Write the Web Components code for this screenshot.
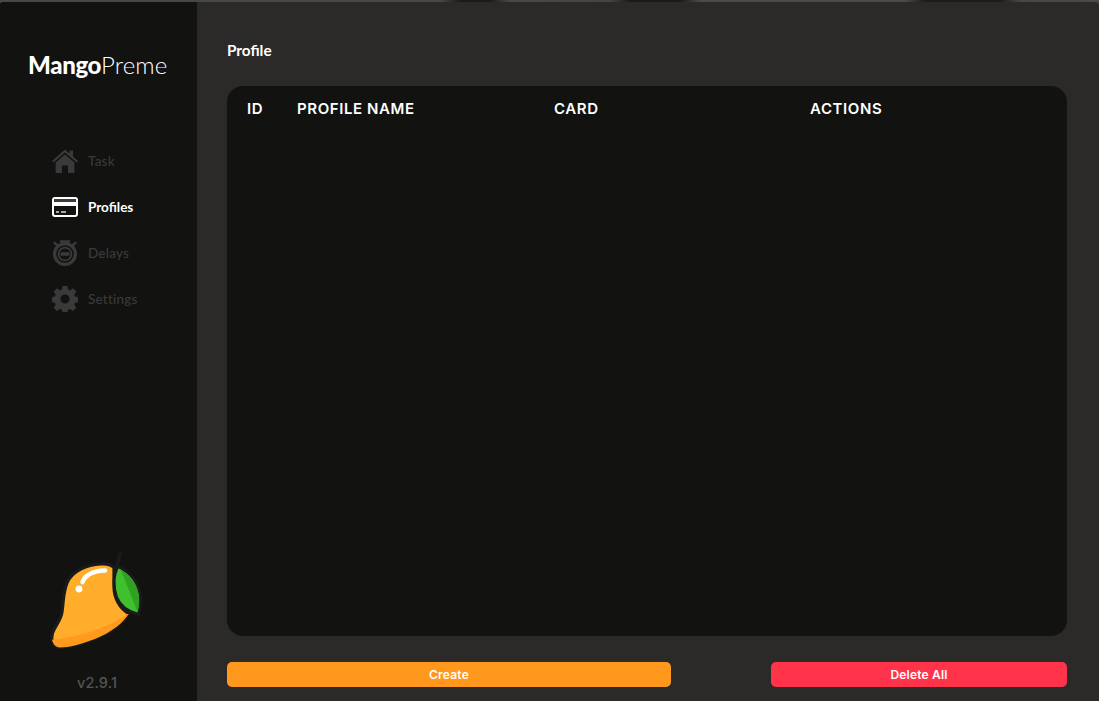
<!DOCTYPE html>
<html lang="en"><head><meta charset="utf-8"><title>MangoPreme</title>
<style>
html,body{margin:0;padding:0;height:100%;background:#2b2a29;overflow:hidden}
body{font-family:"Lato","Liberation Sans",sans-serif}
</style></head><body>
<app-shell>
  <side-bar slot="side">
    <nav-item label="Task" icon="home"></nav-item>
    <nav-item label="Profiles" icon="card" active></nav-item>
    <nav-item label="Delays" icon="watch"></nav-item>
    <nav-item label="Settings" icon="gear"></nav-item>
  </side-bar>
  <profile-page></profile-page>
</app-shell>
<script>
const ICONS={
home:`<svg width="26" height="24" viewBox="0 0 26 24"><path fill="currentColor" d="M13 0.6 L17.6 4.6V1.6H21V7.5L26 12 24.6 13.6 13 3.6 1.4 13.6 0 12Z"/><path fill="currentColor" d="M13 5.6 22.4 13.6V23a1 1 0 0 1-1 1H16V16.5H10V24H4.6a1 1 0 0 1-1-1V13.6Z"/></svg>`,
card:`<svg width="26" height="20" viewBox="0 0 26 20"><rect x="1" y="1" width="24" height="18" rx="2" fill="#121211" stroke="#fff" stroke-width="2"/><rect x="2" y="2" width="22" height="3" fill="#3b3b3b"/><rect x="2" y="5" width="22" height="4" fill="#fff"/><rect x="4" y="14" width="3" height="2" fill="#a8a8a8"/><rect x="9" y="14" width="5" height="2" fill="#a8a8a8"/></svg>`,
watch:`<svg width="26" height="27" viewBox="0 1 26 27"><g fill="none" stroke="currentColor"><circle cx="13" cy="15" r="10.4" stroke-width="3.2"/><circle cx="13" cy="15" r="6.4" stroke-width="1.8"/><path stroke-width="2.4" d="M8 2.4H18M10 2.4V5M16 2.4V5"/><path stroke-width="2.4" stroke-linecap="round" d="M2.600 3.800 5 6M23.400 3.800 21 6"/></g><rect x="8.500" y="13.300" width="9" height="3.400" rx=".8" fill="currentColor"/></svg>`,
gear:`<svg width="26" height="26" viewBox="0 0 26 26"><path fill="currentColor" fill-rule="evenodd" d="M10.600 0h4.800l.7 3.600 1.900.8 3-2.100 3.400 3.400-2.100 3 .8 1.900 3.600.7v4.800l-3.600.7-.8 1.900 2.100 3-3.400 3.400-3-2.100-1.900.8-.7 3.600h-4.800l-.7-3.600-1.900-.8-3 2.100-3.400-3.400 2.100-3-.8-1.900-3.600-.7v-4.800l3.600-.7.8-1.900-2.100-3 3.400-3.400 3 2.100 1.900-.8ZM13 8.400a4.600 4.600 0 1 0 0 9.200 4.600 4.600 0 0 0 0-9.200Z"/></svg>`};

function def(name,css,html){
  customElements.define(name,class extends HTMLElement{
    constructor(){super();const r=this.attachShadow({mode:'open'});
      r.innerHTML=`<style>${css}</style>${typeof html==='function'?html(this):html}`;}
  });
}

def('app-shell',`
:host{display:flex;flex-direction:column;width:1099px;height:701px;overflow:hidden;
  background:linear-gradient(90deg,#484847 0,#484847 440px,#1c1b1b 460px,#1c1b1b 490px,#484847 510px,#444 610px,#1a1a1a 630px,#1a1a1a 680px,#4a4a4a 700px,#4a4a4a 905px,#1c1c1c 925px,#1c1c1c 1000px,#464646 1020px,#4a4a4a 1099px)}
.row{flex:1;display:flex;min-height:0;margin-top:2px;background:#2b2a29;border-radius:3px 4px 0 0;overflow:hidden}
`,`<div class="row"><slot name="side"></slot><slot></slot></div>`);

def('mango-logo',`
:host{display:block;width:105px;height:105px}
svg{display:block}
`,`<svg width="105" height="105" viewBox="0 0 105 105">
<defs><clipPath id="b"><path id="bp" d="M56 14C61 13.500 66 15 69 17.500L69 37C69 47 74 58 84 63.500 78 73 67 82 50 89 36 94 24 97.500 15 97.500 8 97 5.500 89 7.500 83 10 76 16 70 17 62 18.500 52 18 43 22 33 27 21 42 14.500 56 14Z"/></clipPath></defs>
<path d="M75 3 72 17" stroke="#1b1b1b" stroke-width="3.4" stroke-linecap="round"/>
<path d="M56 14C61 13.500 66 15 69 17.500L69 37C69 47 74 58 84 63.500 78 73 67 82 50 89 36 94 24 97.500 15 97.500 8 97 5.500 89 7.500 83 10 76 16 70 17 62 18.500 52 18 43 22 33 27 21 42 14.500 56 14Z" fill="#ffad2a" stroke="#1b1b1b" stroke-width="3.200" stroke-linejoin="round"/>
<g clip-path="url(#b)"><path d="M4 90C30 88 62 79 82 64L90 64 60 100H0Z" fill="#ff9a1e"/></g>
<path d="M73 16.500C85 22 93 32 95.500 46 96 53 95 59 93.500 64.500 84 62 75 56 71.500 47 68 37 68 25 73 16.500Z" fill="#40c02f" stroke="#1b1b1b" stroke-width="3" stroke-linejoin="round"/>
<path d="M74.500 19.500C85 24 92 33 94 46 94.500 52 94 57 92.700 62.300L76.500 21.500Z" fill="#31a123"/>
<path d="M37.500 32C40 25.500 47 21 60 20.500" fill="none" stroke="#fff" stroke-width="4.600" stroke-linecap="round"/>
<circle cx="34" cy="39" r="3.400" fill="#fff"/>
</svg>`);

def('side-bar',`
:host{display:flex;flex-direction:column;width:197px;flex:none;background:#121211;box-sizing:border-box;height:699px}
.brand{margin:51px 0 0 28px;height:24px;font:400 24px/24px "Lato","Liberation Sans",sans-serif;color:#fff;white-space:nowrap}
b{font-weight:900;letter-spacing:-.35px}
span{font-weight:300;letter-spacing:.1px}
nav{display:flex;flex-direction:column;gap:16px;margin:69px 0 0 52px}
.foot{margin-top:auto;display:flex;flex-direction:column;padding-left:45px}
.ver{margin-top:19px;margin-left:32px;margin-bottom:9px;font:500 14.500px/18px "Inter","Liberation Sans",sans-serif;color:#545454;letter-spacing:.1px}
`,`<div class="brand"><b>Mango</b><span>Preme</span></div>
<nav><slot></slot></nav>
<div class="foot"><mango-logo></mango-logo><div class="ver">v2.9.1</div></div>`);

def('nav-item',`
:host{display:flex;align-items:center;height:30px;color:#3a3a3a}
:host([active]){color:#fff}
.i{width:26px;height:30px;display:flex;align-items:center;justify-content:center;flex:none}
svg{display:block}
.t{margin-left:10px;font:500 13.500px/16px "Lato","Liberation Sans",sans-serif;letter-spacing:.2px}
:host([active]) .t{font-weight:700;letter-spacing:0}
`,el=>`<span class="i">${ICONS[el.getAttribute('icon')]}</span><span class="t">${el.getAttribute('label')}</span>`);

def('action-button',`
:host{display:flex;align-items:center;justify-content:center;height:25px;border-radius:5px;color:#fff;
 font:600 12px/27px "Inter","Liberation Sans",sans-serif;background:var(--bg);cursor:pointer;letter-spacing:.2px}
`,`<slot></slot>`);

def('profile-table',`
:host{display:block;height:550px;background:#121211;border-radius:16px;box-sizing:border-box;padding:13px 20px 0}
.h{display:grid;grid-template-columns:50px 257px 256px 1fr;color:#fff;font:600 15px/20px "Inter","Liberation Sans",sans-serif;letter-spacing:.6px}
`,`<div class="h"><span>ID</span><span>PROFILE NAME</span><span>CARD</span><span>ACTIONS</span></div>`);

def('profile-page',`
:host{display:flex;flex-direction:column;flex:1;min-width:0;padding:39px 32px 0 30px;box-sizing:border-box}
h1{margin:0;font:700 15.300px/18px "Lato","Liberation Sans",sans-serif;color:#fff;height:45px}
.b{display:flex;justify-content:space-between;margin-top:26px}
.c{width:444px;--bg:#ff981d}
.d{width:296px;--bg:#ff344a}
`,`<h1>Profile</h1><profile-table></profile-table>
<div class="b"><action-button class="c">Create</action-button><action-button class="d">Delete All</action-button></div>`);
</script>
</body></html>
